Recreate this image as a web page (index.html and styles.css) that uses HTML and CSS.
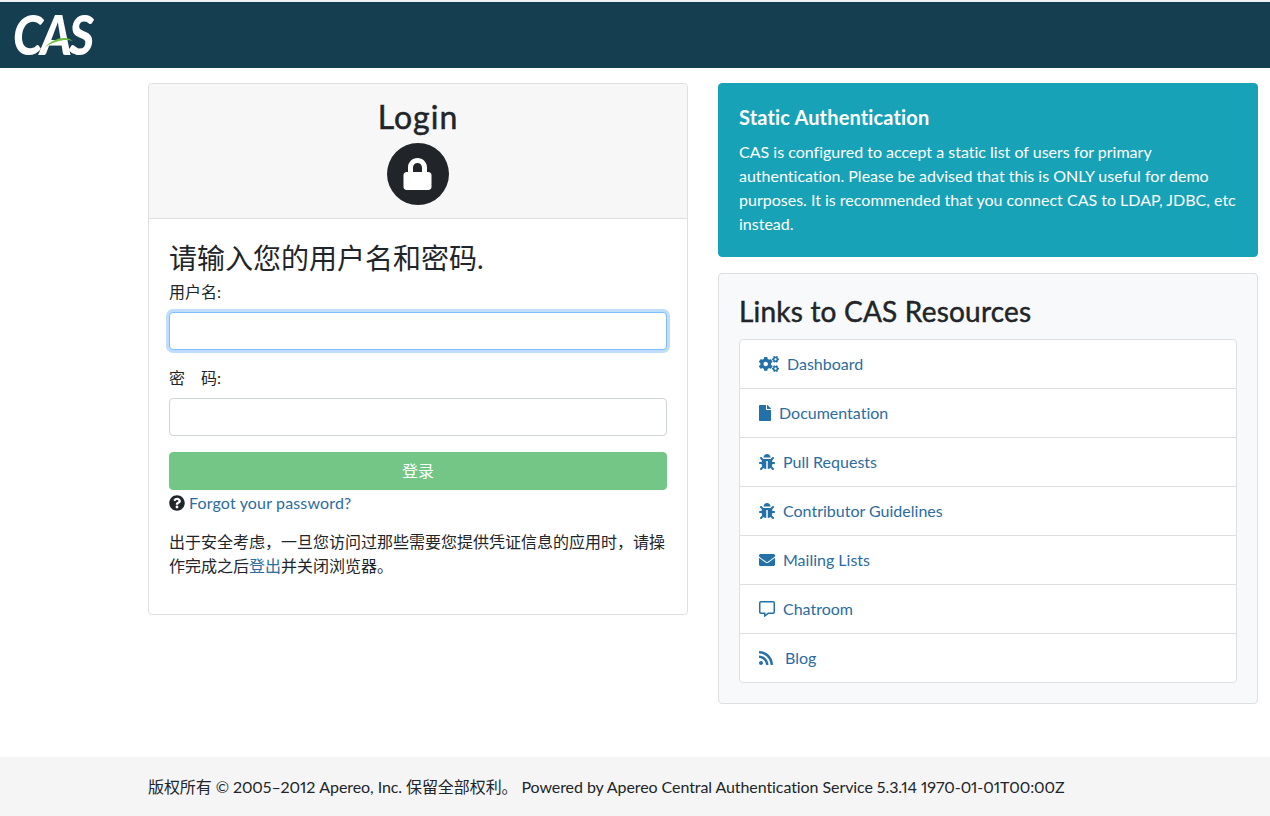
FILE: index.html
```html
<!DOCTYPE html>
<html lang="zh-CN">
<head>
    <meta charset="UTF-8">
    <meta name="viewport" content="width=device-width, initial-scale=1.0">
    <title>CAS - Central Authentication Service</title>
    <link rel="stylesheet" href="styles.css">
</head>
<body>

<svg class="icon-defs" xmlns="http://www.w3.org/2000/svg">
    <symbol id="i-lock" viewBox="0 0 448 512"><path d="M400 224h-24v-72C376 68.2 307.8 0 224 0S72 68.2 72 152v72H48c-26.5 0-48 21.5-48 48v192c0 26.5 21.5 48 48 48h352c26.5 0 48-21.5 48-48V272c0-26.5-21.5-48-48-48zm-104 0H152v-72c0-39.7 32.3-72 72-72s72 32.3 72 72v72z"/></symbol>
    <symbol id="i-question" viewBox="0 0 512 512"><path d="M504 256c0 136.997-111.043 248-248 248S8 392.997 8 256C8 119.083 119.043 8 256 8s248 111.083 248 248zM262.655 90c-54.497 0-89.255 22.957-116.549 63.758-3.536 5.286-2.353 12.415 2.715 16.258l34.699 26.31c5.205 3.947 12.621 3.008 16.665-2.122 17.864-22.658 30.113-35.797 57.303-35.797 20.429 0 45.698 13.148 45.698 32.958 0 14.976-12.363 22.667-32.534 33.976C247.128 238.528 216 254.941 216 296v4c0 6.627 5.373 12 12 12h56c6.627 0 12-5.373 12-12v-1.333c0-28.462 83.186-29.647 83.186-106.667 0-58.002-60.165-102-116.531-102zM256 338c-25.365 0-46 20.635-46 46 0 25.364 20.635 46 46 46s46-20.636 46-46c0-25.365-20.635-46-46-46z"/></symbol>
    <symbol id="i-cogs" viewBox="0 0 640 512"><path d="M512.1 191l-8.2 14.3c-3 5.3-9.4 7.5-15.1 5.4-11.8-4.4-22.6-10.7-32.1-18.6-4.6-3.8-5.8-10.5-2.8-15.7l8.2-14.3c-6.9-8-12.3-17.3-15.9-27.4h-16.5c-6 0-11.2-4.3-12.2-10.3-2-12-2.1-24.6 0-37.1 1-6 6.2-10.4 12.2-10.4h16.5c3.6-10.1 9-19.4 15.9-27.4l-8.2-14.3c-3-5.2-1.9-11.9 2.8-15.7 9.5-7.9 20.4-14.2 32.1-18.6 5.7-2.1 12.1.1 15.1 5.4l8.2 14.3c10.5-1.9 21.2-1.9 31.7 0L552 6.3c3-5.3 9.4-7.5 15.1-5.4 11.8 4.4 22.6 10.7 32.1 18.6 4.6 3.8 5.8 10.5 2.8 15.7l-8.2 14.3c6.9 8 12.3 17.3 15.9 27.4h16.5c6 0 11.2 4.3 12.2 10.3 2 12 2.1 24.6 0 37.1-1 6-6.2 10.4-12.2 10.4h-16.5c-3.6 10.1-9 19.4-15.9 27.4l8.2 14.3c3 5.2 1.9 11.9-2.8 15.7-9.5 7.9-20.4 14.2-32.1 18.6-5.7 2.1-12.1-.1-15.1-5.4l-8.2-14.3c-10.4 1.9-21.2 1.9-31.7 0zm-10.5-58.8c38.5 29.6 82.4-14.3 52.8-52.8-38.5-29.7-82.4 14.3-52.8 52.8zM386.3 286.1l33.7 16.8c10.1 5.8 14.5 18.1 10.5 29.1-8.9 24.2-26.4 46.4-42.6 65.8-7.4 8.9-20.2 11.1-30.3 5.3l-29.1-16.8c-16 13.7-34.6 24.6-54.9 31.7v33.6c0 11.6-8.3 21.6-19.7 23.6-24.6 4.2-50.4 4.4-75.9 0-11.5-2-20-11.9-20-23.6V418c-20.3-7.2-38.9-18-54.9-31.7L74 403c-10 5.8-22.9 3.6-30.3-5.3-16.2-19.4-33.3-41.6-42.2-65.7-4-10.9.4-23.2 10.5-29.1l33.3-16.8c-3.9-20.9-3.9-42.4 0-63.4L12 205.8c-10.1-5.8-14.6-18.1-10.5-29 8.9-24.2 26-46.4 42.2-65.8 7.4-8.9 20.2-11.1 30.3-5.3l29.1 16.8c16-13.7 34.6-24.6 54.9-31.7V57.1c0-11.5 8.2-21.5 19.6-23.5 24.6-4.2 50.5-4.4 76-.1 11.5 2 20 11.9 20 23.6v33.6c20.3 7.2 38.9 18 54.9 31.7l29.1-16.8c10-5.8 22.9-3.6 30.3 5.3 16.2 19.4 33.2 41.6 42.1 65.8 4 10.9.1 23.2-10 29.1l-33.7 16.8c3.9 21 3.9 42.5 0 63.5zm-117.6 21.1c59.2-77-28.7-164.9-105.7-105.7-59.2 77 28.7 164.9 105.7 105.7zm243.4 182.7l-8.2 14.3c-3 5.3-9.4 7.5-15.1 5.4-11.8-4.4-22.6-10.7-32.1-18.6-4.6-3.8-5.8-10.5-2.8-15.7l8.2-14.3c-6.9-8-12.3-17.3-15.9-27.4h-16.5c-6 0-11.2-4.3-12.2-10.3-2-12-2.1-24.6 0-37.1 1-6 6.2-10.4 12.2-10.4h16.5c3.6-10.1 9-19.4 15.9-27.4l-8.2-14.3c-3-5.2-1.9-11.9 2.8-15.7 9.5-7.9 20.4-14.2 32.1-18.6 5.7-2.1 12.1.1 15.1 5.4l8.2 14.3c10.5-1.9 21.2-1.9 31.7 0l8.2-14.3c3-5.3 9.4-7.5 15.1-5.4 11.8 4.4 22.6 10.7 32.1 18.6 4.6 3.8 5.8 10.5 2.8 15.7l-8.2 14.3c6.9 8 12.3 17.3 15.9 27.4h16.5c6 0 11.2 4.3 12.2 10.3 2 12 2.1 24.6 0 37.1-1 6-6.2 10.4-12.2 10.4h-16.5c-3.6 10.1-9 19.4-15.9 27.4l8.2 14.3c3 5.2 1.9 11.9-2.8 15.7-9.5 7.9-20.4 14.2-32.1 18.6-5.7 2.1-12.1-.1-15.1-5.4l-8.2-14.3c-10.4 1.9-21.2 1.9-31.7 0zM501.6 431c38.5 29.6 82.4-14.3 52.8-52.8-38.5-29.6-82.4 14.3-52.8 52.8z"/></symbol>
    <symbol id="i-file" viewBox="0 0 384 512"><path d="M224 136V0H24C10.7 0 0 10.7 0 24v464c0 13.3 10.7 24 24 24h336c13.3 0 24-10.7 24-24V160H248c-13.2 0-24-10.8-24-24zm160-14.1v6.1H256V0h6.1c6.4 0 12.5 2.5 17 7l97.9 98c4.5 4.5 7 10.6 7 16.9z"/></symbol>
    <symbol id="i-bug" viewBox="0 0 512 512"><path d="M511.988 288.9c-.478 17.43-15.217 31.1-32.653 31.1H424v16c0 21.864-4.882 42.584-13.6 61.145l60.228 60.228c12.496 12.497 12.496 32.758 0 45.255-12.498 12.497-32.759 12.496-45.256 0l-54.736-54.736C345.886 467.965 314.351 480 280 480V236c0-6.627-5.373-12-12-12h-24c-6.627 0-12 5.373-12 12v244c-34.351 0-65.886-12.035-90.636-32.108l-54.736 54.736c-12.498 12.497-32.759 12.496-45.256 0-12.496-12.497-12.496-32.758 0-45.255l60.228-60.228C92.882 378.584 88 357.864 88 336v-16H32.666C15.23 320 .491 306.33.013 288.9-.484 270.816 14.028 256 32 256h56v-58.745l-46.628-46.628c-12.496-12.497-12.496-32.758 0-45.255 12.498-12.497 32.758-12.497 45.256 0L141.255 160h229.489l54.627-54.627c12.498-12.497 32.758-12.497 45.256 0 12.496 12.497 12.496 32.758 0 45.255L424 197.255V256h56c17.972 0 32.484 14.816 31.988 32.9zM257 0c-61.856 0-112 50.144-112 112h224C369 50.144 318.856 0 257 0z"/></symbol>
    <symbol id="i-envelope" viewBox="0 0 512 512"><path d="M502.3 190.8c3.9-3.1 9.7-.2 9.7 4.7V400c0 26.5-21.5 48-48 48H48c-26.5 0-48-21.5-48-48V195.6c0-5 5.7-7.8 9.7-4.7 22.4 17.4 52.1 39.5 154.1 113.6 21.1 15.4 56.7 47.8 92.2 47.6 35.7.3 72-32.8 92.3-47.6 102-74.1 131.6-96.3 154-113.7zM256 320c23.2.4 56.6-29.2 73.4-41.4 132.7-96.3 142.8-104.7 173.4-128.7 5.8-4.5 9.2-11.5 9.2-18.9v-19c0-26.5-21.5-48-48-48H48C21.5 64 0 85.5 0 112v19c0 7.4 3.4 14.3 9.2 18.9 30.6 23.9 40.7 32.4 173.4 128.7 16.8 12.2 50.2 41.8 73.4 41.4z"/></symbol>
    <symbol id="i-comment" viewBox="0 0 512 512"><path d="M448 0H64C28.7 0 0 28.7 0 64v288c0 35.3 28.7 64 64 64h96v84c0 7.1 5.9 12 12 12 2.4 0 4.9-.7 7.1-2.4L304 416h144c35.3 0 64-28.7 64-64V64c0-35.3-28.7-64-64-64zm16 352c0 8.8-7.2 16-16 16H288l-12.8 9.6L208 428v-60H64c-8.8 0-16-7.2-16-16V64c0-8.8 7.2-16 16-16h384c8.8 0 16 7.2 16 16v288z"/></symbol>
    <symbol id="i-rss" viewBox="0 0 448 512"><path d="M128.081 415.959c0 35.369-28.672 64.041-64.041 64.041S0 451.328 0 415.959s28.672-64.041 64.041-64.041 64.04 28.673 64.04 64.041zm175.66 47.25c-8.354-154.6-132.185-278.587-286.95-286.95C7.656 175.765 0 183.105 0 192.253v48.069c0 8.415 6.49 15.472 14.887 16.018 111.832 7.284 201.473 96.702 208.772 208.772.547 8.397 7.604 14.887 16.018 14.887h48.069c9.149.001 16.489-7.655 15.995-16.79zm144.249.288C439.596 229.677 251.465 40.445 16.503 32.01 7.473 31.686 0 38.981 0 48.016v48.068c0 8.625 6.835 15.645 15.453 15.999 191.179 7.839 344.627 161.316 352.465 352.465.353 8.618 7.373 15.453 15.999 15.453h48.068c9.034-.001 16.329-7.474 16.005-16.504z"/></symbol>
</svg>

<header class="site-header">
    <div class="logo">
        <span class="logo-text">CAS</span>
        <svg class="logo-swoosh" viewBox="0 0 30 12"><path d="M1 11C7 5 14 1.500 21 2c3 .2 6 1.500 8 3-3-1-6-1.300-9-1C13 4.700 7 7.500 1 11z"/></svg>
    </div>
</header>

<main class="page-main">
    <section class="login-card">
        <div class="login-head">
            <h2 class="login-title">Login</h2>
            <span class="lock-badge"><svg class="lock-icon"><use href="#i-lock"/></svg></span>
        </div>
        <form class="login-body">
            <h3 class="login-prompt">请输入您的用户名和密码.</h3>
            <div class="form-group">
                <label class="form-label" for="username">用户名:</label>
                <input class="form-input is-focused" id="username" type="text">
            </div>
            <div class="form-group">
                <label class="form-label" for="password">密　码:</label>
                <input class="form-input" id="password" type="password">
            </div>
            <button class="login-btn" type="button">登录</button>
            <div class="forgot-row">
                <svg class="icon icon-question"><use href="#i-question"/></svg>
                <a href="#">Forgot your password?</a>
            </div>
            <p class="login-note">出于安全考虑，一旦您访问过那些需要您提供凭证信息的应用时，请操作完成之后<a href="#">登出</a>并关闭浏览器。</p>
        </form>
    </section>

    <aside class="side-col">
        <div class="info-alert">
            <h4 class="info-title">Static Authentication</h4>
            <p class="info-text">CAS is configured to accept a static list of users for primary authentication. Please be advised that this is ONLY useful for demo purposes. It is recommended that you connect CAS to LDAP, JDBC, etc instead.</p>
        </div>
        <div class="links-card">
            <h2 class="links-title">Links to CAS Resources</h2>
            <ul class="links-list">
                <li><a href="#"><svg class="icon icon-cogs"><use href="#i-cogs"/></svg>Dashboard</a></li>
                <li><a href="#"><svg class="icon icon-file"><use href="#i-file"/></svg>Documentation</a></li>
                <li><a href="#"><svg class="icon"><use href="#i-bug"/></svg>Pull Requests</a></li>
                <li><a href="#"><svg class="icon"><use href="#i-bug"/></svg>Contributor Guidelines</a></li>
                <li><a href="#"><svg class="icon"><use href="#i-envelope"/></svg>Mailing Lists</a></li>
                <li><a href="#"><svg class="icon"><use href="#i-comment"/></svg>Chatroom</a></li>
                <li><a href="#"><svg class="icon icon-rss"><use href="#i-rss"/></svg>Blog</a></li>
            </ul>
        </div>
    </aside>
</main>

<footer class="site-footer">版权所有 © 2005–2012 Apereo, Inc. 保留全部权利。 Powered by Apereo Central Authentication Service 5.3.14 1970-01-01T00:00Z</footer>

</body>
</html>
```

FILE: styles.css
```css
* {
    box-sizing: border-box;
}

html, body {
    margin: 0;
    padding: 0;
    height: 100%;
    overflow: hidden;
}

body {
    display: flex;
    flex-direction: column;
    background: #fff;
    color: #212529;
    font-family: Lato, "Noto Sans CJK SC", sans-serif;
    font-size: 16px;
    font-variant-ligatures: none;
    font-variant-numeric: proportional-nums;
    line-height: 24px;
}

a {
    color: #2c6c9f;
    text-decoration: none;
}

.icon-defs {
    display: none;
}

/* Header */
.site-header {
    height: 68px;
    flex: none;
    padding-left: 13px;
    background: #153e50;
    border-top: 2px solid #eef1f2;
}

.logo {
    position: relative;
    width: 80px;
    height: 66px;
}

.logo-text {
    display: block;
    color: #fff;
    font-family: Lato, sans-serif;
    font-size: 55px;
    font-style: italic;
    font-weight: 900;
    letter-spacing: -3px;
    line-height: 65px;
    transform: scaleX(.88);
    transform-origin: left center;
}

.logo-swoosh {
    position: absolute;
    left: 31px;
    top: 34px;
    width: 30px;
    height: 12px;
    fill: #6fbe44;
}

/* Main columns */
.page-main {
    flex: 1;
    display: flex;
    align-items: flex-start;
    gap: 30px;
    padding: 15px 0 0 148px;
}

.login-card {
    width: 540px;
    border: 1px solid #dfdfdf;
    border-radius: 4px;
}

.login-head {
    display: flex;
    flex-direction: column;
    align-items: center;
    height: 135px;
    padding-top: 14px;
    background: #f7f7f7;
    border-bottom: 1px solid #dfdfdf;
    border-radius: 4px 4px 0 0;
}

.login-title {
    margin: 0 0 7px;
    font-size: 32px;
    font-weight: 400;
    letter-spacing: 1px;
    line-height: 38px;
    -webkit-text-stroke: .5px #212529;
}

.lock-badge {
    display: flex;
    align-items: center;
    justify-content: center;
    width: 62px;
    height: 62px;
    margin-right: 1px;
    background: #212529;
    border-radius: 50%;
}

.lock-icon {
    width: 29px;
    height: 32px;
    fill: #fff;
}

.login-body {
    padding: 20px;
}

.login-prompt {
    margin: 2px 0 5px;
    font-size: 28px;
    font-weight: 400;
    line-height: 34px;
}

.form-group {
    margin-bottom: 16px;
}

.form-label {
    display: block;
    margin-bottom: 8px;
}

.form-input {
    display: block;
    width: 100%;
    height: 38px;
    background: #fff;
    border: 1px solid #ced4da;
    border-radius: 4px;
    outline: none;
}

.form-input.is-focused {
    border-color: #80bdff;
    box-shadow: 0 0 0 3px rgba(0, 123, 255, .25);
}

.login-btn {
    display: block;
    width: 100%;
    height: 38px;
    padding: 0;
    background: #73c686;
    border: 1px solid #73c686;
    border-radius: 4px;
    color: #fff;
    font: inherit;
}

.forgot-row {
    display: flex;
    align-items: center;
    gap: 4px;
    margin-top: 1px;
    letter-spacing: .15px;
}

.login-note {
    margin: 15px 0 16px;
}

/* Right column */
.side-col {
    width: 540px;
    display: flex;
    flex-direction: column;
    gap: 16px;
}

.info-alert {
    padding: 20px;
    background: #17a2b8;
    border: 1px solid #17a2b8;
    border-radius: 4px;
    color: #fff;
}

.info-title {
    margin: 0 0 10px;
    font-size: 20px;
    font-weight: 700;
    letter-spacing: .15px;
    line-height: 26px;
}

.info-text {
    margin: 0;
}

.links-card {
    padding: 20px;
    background: #f8f9fa;
    border: 1px solid #dfdfdf;
    border-radius: 4px;
}

.links-title {
    margin: 0 0 10px;
    font-size: 28px;
    font-weight: 400;
    letter-spacing: .2px;
    line-height: 35px;
    -webkit-text-stroke: .45px #212529;
}

.links-list {
    margin: 0;
    padding: 0;
    list-style: none;
    background: #fff;
    border: 1px solid #dfdfdf;
    border-radius: 4px;
}

.links-list li {
    height: 49px;
    padding: 12px 19px;
    border-bottom: 1px solid #dfdfdf;
}

.links-list li:last-child {
    height: 48px;
    border-bottom: 0;
}

.links-list a {
    display: flex;
    align-items: center;
    gap: 8px;
}

.icon {
    width: 16px;
    height: 16px;
    flex: none;
    fill: #2470a8;
}

.icon-question {
    fill: #212529;
}

.icon-cogs {
    width: 20px;
}

.icon-file {
    width: 12px;
}

.icon-rss {
    width: 14px;
    margin-right: 4px;
}

/* Footer */
.site-footer {
    flex: none;
    height: 59px;
    padding: 18px 0 0 148px;
    background: #f5f5f5;
    letter-spacing: -.08px;
}
```
